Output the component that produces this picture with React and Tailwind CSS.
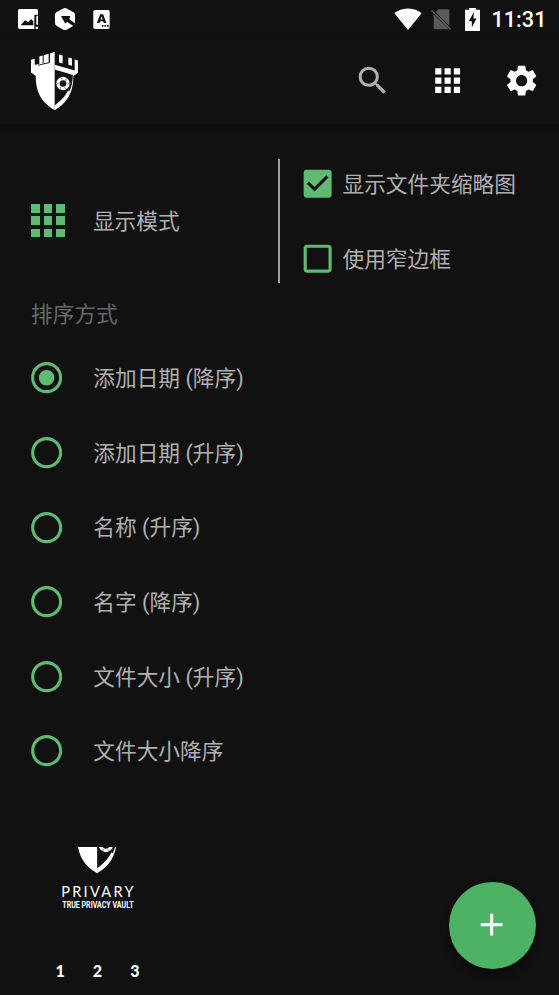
import {
  MdAdd,
  MdApps,
  MdCheckBox,
  MdCheckBoxOutlineBlank,
  MdRadioButtonChecked,
  MdRadioButtonUnchecked,
  MdSearch,
  MdSettings,
  MdSignalWifi4Bar,
} from "react-icons/md";

const sortOptions = [
  { label: "添加日期 (降序)", checked: true },
  { label: "添加日期 (升序)" },
  { label: "名称 (升序)" },
  { label: "名字 (降序)" },
  { label: "文件大小 (升序)" },
  { label: "文件大小降序" },
];

const ShieldLogo = ({ className }) => (
  <svg viewBox="90 150 150 185" className={className}>
    {/* left half */}
    <path
      fill="#fff"
      d="M93 179l11-3v18l46-8v-26l14-5v175c-28-16-57-42-57-103l-14-10z"
    />
    <path d="M114 195l35-8" fill="none" stroke="#111" strokeWidth="3" />
    <path
      d="M118 169l10-3v24l-10 3zM131 165l15-4v25l-15 3z"
      fill="#fff"
    />
    {/* right half */}
    <path
      fill="#fff"
      d="M164 194l60 17v-33l10 3v37l-14 10c1 58-29 86-56 102v-14c27-20 50-44 50-92l-2-2-48-14z"
    />
    <path fill="#fff" d="M177 163l11 3v24l-11-3zM205 172l11 3v22l-11-3z" />
    <path d="M216 224c0 22-3 34-10 48" fill="none" stroke="#111" strokeWidth="5" />
    {/* aperture */}
    <circle cx="189" cy="250" r="15" fill="none" stroke="#fff" strokeWidth="10" />
    <path
      d="M187 237l-10-8M198 242l1-13M202 253l9-7M193 262l10 7M181 260l-1 12M177 248l-9 6"
      stroke="#111"
      strokeWidth="1.5"
    />
  </svg>
);

const StatusBar = () => (
  <div className="flex h-[38px] items-center justify-between pl-[18px] pr-[12.5px]">
    <div className="flex items-center gap-[17px]">
      <svg viewBox="0 0 60 60" className="h-5 w-5">
        <path
          fill="#fff"
          fillRule="evenodd"
          d="M5 0h50q5 0 5 5v12H49v43H5q-5 0-5-5V5q0-5 5-5zM8 49h38V37l-7-7-8 10-10-6z"
        />
        <path fill="#fff" d="M55 20h5v27h-5zM53 53h7v7h-7z" />
      </svg>
      <svg viewBox="0 0 60 66" className="h-[22px] w-5">
        <path fill="#fff" d="M30 0q3 0 6 2l20 11q4 2 4 7v25q0 5-4 8L35 65q-5 2-10 0L4 53q-4-3-4-8V20q0-5 4-7L24 2q3-2 6-2z" />
        <path fill="#111" d="M18 24h28l-3 9 18 14v5l-5 3-20-14-5 6z" />
      </svg>
      <svg viewBox="0 0 50 58" className="ml-px h-[19px] w-[17px]">
        <rect width="50" height="58" rx="5" fill="#fff" />
        <path
          fill="#111"
          fillRule="evenodd"
          d="M21 13h9l10 27h-8l-2-6h-9l-2 6h-8zM25 20l-3 9h7zM26 46h5v5h-5zM34 46h5v5h-5zM42 46h5v5h-5z"
        />
      </svg>
    </div>
    <div className="flex items-center">
      <MdSignalWifi4Bar className="h-7 w-7 text-white" />
      <svg viewBox="0 0 60 62" className="ml-[9px] h-[21px] w-5">
        <path fill="#5b5b5b" d="M23 0h28q4 0 4 4v46L14 9zM8 16l46 44H12q-4 0-4-4z" />
        <path d="M2 4l56 56" stroke="#5b5b5b" strokeWidth="5" />
      </svg>
      <svg viewBox="0 0 44 68" className="ml-[14px] h-[23px] w-[15px]">
        <path fill="#fff" d="M12 0h20v5h12v63H0V5h12z" />
        <path fill="#111" d="M26 12L11 39h9v19l14-27h-9z" />
      </svg>
      <span className="ml-[11.5px] pt-px font-[Roboto] text-[21.7px] font-medium leading-none text-white">
        11:31
      </span>
    </div>
  </div>
);

const Toolbar = () => (
  <header className="flex h-[86px] items-center justify-between pl-[30px] pr-[18.5px] shadow-[0_2px_5px_rgba(0,0,0,0.2)]">
    <ShieldLogo className="h-[62px] w-[50px]" />
    <div className="flex items-center gap-[37.3px]">
      <MdSearch className="size-[37.3px] text-[#b0b0b0]" />
      <MdApps className="size-[37.3px] text-white" />
      <MdSettings className="size-[37.3px] text-white" />
    </div>
  </header>
);

const DisplayOptions = () => (
  <section className="mt-[34.5px] flex h-[124.5px]">
    <div className="flex w-[278px] items-center pl-[31.3px]">
      <div className="grid grid-cols-3 gap-[3.7px]">
        {Array.from({ length: 9 }, (_, i) => (
          <span key={i} className="size-[8.7px] bg-[#5fbb74]" />
        ))}
      </div>
      <span className="ml-[28.2px] pt-[2px]">显示模式</span>
    </div>
    <div className="w-[2px] bg-[#a0a0a0]" />
    <div className="-mt-[12px] flex flex-col pl-[18.6px]">
      <label className="flex h-[74.6px] shrink-0 items-center">
        <MdCheckBox className="size-[37.3px] text-[#5fbb74]" />
        <span className="ml-[6.6px] pt-[2px]">显示文件夹缩略图</span>
      </label>
      <label className="flex h-[74.6px] shrink-0 items-center">
        <MdCheckBoxOutlineBlank className="size-[37.3px] text-[#5fbb74]" />
        <span className="ml-[6.6px] pt-[2px]">使用窄边框</span>
      </label>
    </div>
  </section>
);

const SortOption = ({ label, checked }) => {
  const Icon = checked ? MdRadioButtonChecked : MdRadioButtonUnchecked;
  return (
    <label className="flex h-[74.6px] items-center pl-[28px]">
      <Icon className="size-[37.3px] text-[#5fbb74]" />
      <span className="ml-[28px] pt-[2px]">{label}</span>
    </label>
  );
};

const FolderCard = () => (
  <div className="ml-[12px] mt-[58.5px] flex h-[180px] w-[171px] flex-col items-center overflow-hidden rounded-lg bg-[#101111] text-white">
    <div className="flex h-[28px] items-end">
      <ShieldLogo className="h-[65px] w-[53px] shrink-0" />
    </div>
    <span className="mt-[9px] pl-[2px] font-[Lato] text-[14.5px] leading-[16px] tracking-[2.3px]">
      PRIVARY
    </span>
    <span className="scale-x-[0.83] whitespace-nowrap font-[Roboto] text-[8.5px] font-bold leading-[11px]">
      TRUE PRIVACY VAULT
    </span>
    <div className="mt-[50px] grid w-[112px] grid-cols-3 text-center font-[Lato] text-[16px] font-black leading-[20px]">
      <span>1</span>
      <span>2</span>
      <span>3</span>
    </div>
  </div>
);

const App = () => {
  return (
    <div className="relative h-[995px] w-[559px] overflow-hidden bg-[#111] font-[Roboto,'Noto_Sans_CJK_SC',sans-serif] text-[21.7px] leading-none text-[#b0b0b0]">
      <StatusBar />
      <Toolbar />
      <DisplayOptions />
      <h2 className="mt-[21px] pl-[31px] leading-[22px] text-[#686868]">排序方式</h2>
      <div className="mt-[14.7px]">
        {sortOptions.map((option) => (
          <SortOption key={option.label} {...option} />
        ))}
      </div>
      <FolderCard />

      {/* add button */}
      <button className="absolute bottom-[26.5px] right-[23.5px] flex size-[87px] items-center justify-center rounded-full bg-[#4db263] shadow-[0_5px_8px_rgba(0,0,0,0.45)]">
        <MdAdd className="size-[37.3px] text-white" />
      </button>
    </div>
  );
};

export default App;
